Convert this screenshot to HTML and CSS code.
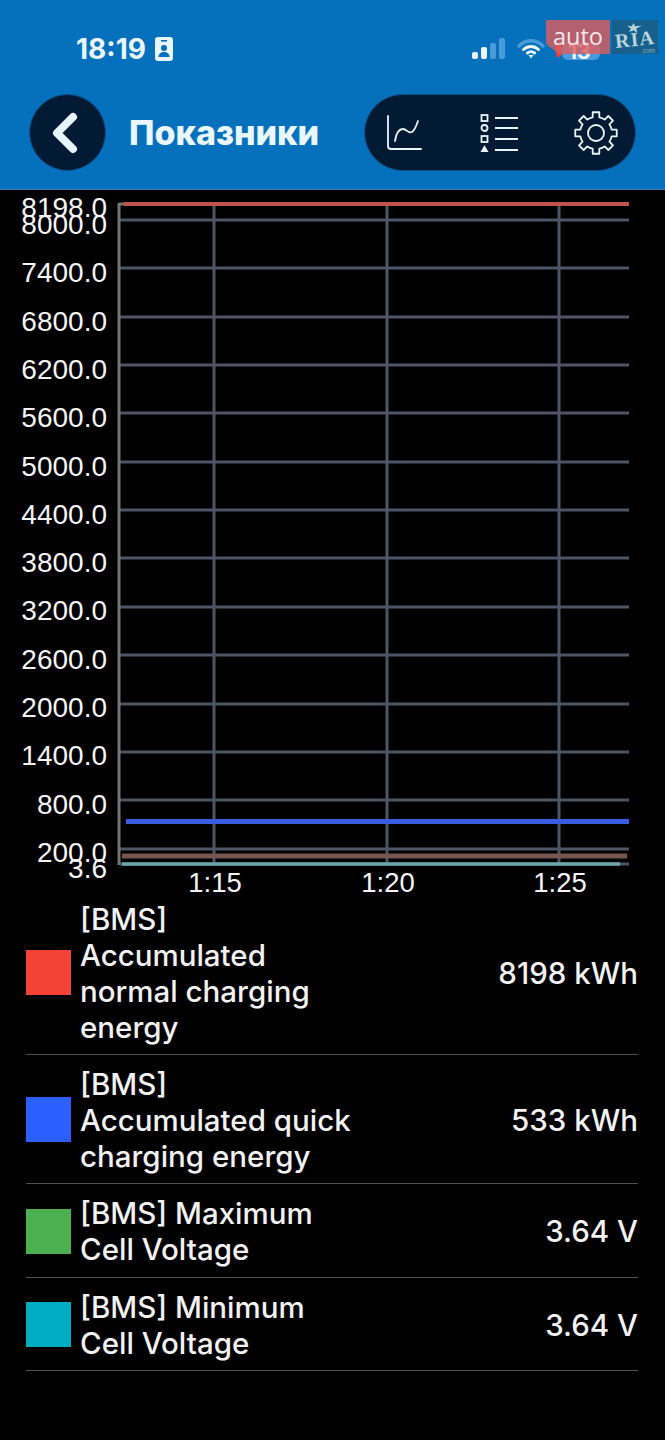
FILE: index.html
```html
<!DOCTYPE html>
<html lang="en">
<head>
    <meta charset="UTF-8">
    <meta name="viewport" content="width=device-width, initial-scale=1.0">
    <title>Показники</title>
    <link rel="stylesheet" href="styles.css">
</head>
<body>
    <header class="top-panel">
        <div class="status-bar">
            <div class="status-left">
                <span class="clock">18:19</span>
                <svg class="id-badge" width="18" height="24" viewBox="0 0 18 24">
                    <rect width="18" height="24" rx="3" fill="#eaf6fd"/>
                    <rect x="6" y="3" width="6" height="1.6" fill="#0571bc"/>
                    <circle cx="9" cy="11" r="3" fill="#0571bc"/>
                    <path d="M3.5 20c0-3.5 2.5-5 5.500-5s5.500 1.500 5.500 5z" fill="#0571bc"/>
                </svg>
            </div>
            <div class="status-right">
                <svg width="33" height="21" viewBox="0 0 33 21">
                    <rect x="0" y="14" width="6" height="7" rx="2" fill="#eaf6fd"/>
                    <rect x="9" y="9" width="6" height="12" rx="2" fill="#eaf6fd"/>
                    <rect x="18" y="5" width="6" height="16" rx="2" fill="#4a9bd8"/>
                    <rect x="27" y="0" width="6" height="21" rx="2" fill="#4a9bd8"/>
                </svg>
                <svg width="28" height="21" viewBox="0 0 28 21" fill="none" stroke-linecap="round">
                    <path d="M2 8c7-7 17-7 24 0" stroke="#4a9bd8" stroke-width="3.500"/>
                    <path d="M6.500 11.500c4.500-4 10.500-4 15 0" stroke="#eaf6fd" stroke-width="3"/>
                    <path d="M10.500 15c2-1.700 5-1.700 7 0" stroke="#eaf6fd" stroke-width="3"/>
                    <path d="M11.500 17l2.500 3.500 2.500-3.500z" fill="#eaf6fd"/>
                </svg>
                <div class="battery"><span class="battery-dot"></span><span class="battery-level">13</span></div>
            </div>
        </div>
        <nav class="nav-row">
            <button class="back-btn">
                <svg width="28" height="42" viewBox="0 0 28 42" fill="none">
                    <path d="M22 5L6 21l16 16" stroke="#e6f4fd" stroke-width="8" stroke-linecap="round" stroke-linejoin="round"/>
                </svg>
            </button>
            <h1 class="page-title">Показники</h1>
            <div class="tool-pill">
                <svg width="36" height="36" viewBox="0 0 36 36" fill="none" stroke="#eaf6fd" stroke-width="1.800" stroke-linecap="round">
                    <path d="M2 1v30q0 3 3 3h30"/>
                    <path d="M9 26c1-7 4-12 8-12s5 5 9 3c3-2 5-8 6-11"/>
                </svg>
                <svg class="list-icon" width="38" height="38" viewBox="0 0 38 38" fill="none" stroke="#eaf6fd" stroke-width="1.800">
                    <rect x="1.500" y="1" width="6" height="6"/>
                    <circle cx="4.500" cy="14" r="3"/>
                    <rect x="1.500" y="22" width="6" height="6"/>
                    <path d="M4.500 33l3 5h-6z" fill="#eaf6fd"/>
                    <path d="M15 4h23M15 14h23M15 25h23M15 36h23" stroke-width="2"/>
                </svg>
                <svg width="44" height="44" viewBox="-22 -22 44 44" fill="none" stroke="#eaf6fd" stroke-width="1.800" stroke-linejoin="round">
                    <path d="M-3.330-15.650L-3.290-20.740L3.290-20.740L3.330-15.650A16 16 0 0 1 8.710-13.420L12.340-16.990L16.990-12.340L13.420-8.710A16 16 0 0 1 15.650-3.330L20.740-3.290L20.740 3.290L15.650 3.330A16 16 0 0 1 13.420 8.710L16.990 12.340L12.340 16.990L8.710 13.420A16 16 0 0 1 3.330 15.650L3.290 20.740L-3.290 20.740L-3.330 15.650A16 16 0 0 1-8.710 13.420L-12.340 16.990L-16.990 12.340L-13.420 8.710A16 16 0 0 1-15.650 3.330L-20.740 3.290L-20.740-3.290L-15.650-3.330A16 16 0 0 1-13.420-8.710L-16.990-12.340L-12.340-16.990L-8.710-13.420A16 16 0 0 1-3.330-15.650z"/>
                    <circle r="8"/>
                </svg>
            </div>
        </nav>
    </header>

    <!-- auto.ria stamp sits over the status bar -->
    <div class="stamp">
        <div class="stamp-auto">auto</div>
        <div class="stamp-ria">
            <svg class="stamp-star" width="17" height="10" viewBox="0 0 16 11"><path d="M7 0l1.500 3.500L16 3 10 6l1 5-4-3-5 2 2-4-4-3 5 .5z" fill="#b9d3dd"/></svg>
            <span class="stamp-name">RIA</span>
            <span class="stamp-com">.com</span>
        </div>
    </div>

    <section class="chart">
        <svg class="chart-svg" width="665" height="711" viewBox="0 190 665 711">
            <g class="grid">
                <path d="M120 220H629M120 268H629M120 317H629M120 365H629M120 413H629M120 462H629M120 510H629M120 558H629M120 607H629M120 655H629M120 704H629M120 752H629M120 800H629M120 849H629M120 864H629"/>
                <path d="M214 204V864M387 204V864M559 204V864"/>
            </g>
            <path class="axis" d="M119 203V865"/>
            <path class="axis" d="M119 204H124"/>
            <path class="line-normal" d="M124 204H629"/>
            <path class="line-quick" d="M126 821.500H629"/>
            <path class="line-max" d="M122 856H627"/>
            <path class="line-min" d="M122 864H620"/>
            <g class="y-labels">
                <text x="107" y="217">8198.0</text>
                <text x="107" y="234">8000.0</text>
                <text x="107" y="282">7400.0</text>
                <text x="107" y="331">6800.0</text>
                <text x="107" y="379">6200.0</text>
                <text x="107" y="427">5600.0</text>
                <text x="107" y="476">5000.0</text>
                <text x="107" y="524">4400.0</text>
                <text x="107" y="572">3800.0</text>
                <text x="107" y="620">3200.0</text>
                <text x="107" y="669">2600.0</text>
                <text x="107" y="717">2000.0</text>
                <text x="107" y="765">1400.0</text>
                <text x="107" y="814">800.0</text>
                <text x="107" y="862">200.0</text>
                <text x="107" y="878">3.6</text>
            </g>
            <g class="x-labels">
                <text x="215" y="892">1:15</text>
                <text x="388" y="892">1:20</text>
                <text x="560" y="892">1:25</text>
            </g>
        </svg>
    </section>

    <ul class="legend">
        <li class="legend-row">
            <span class="swatch swatch-red"></span>
            <span class="legend-name">[BMS]<br>Accumulated<br>normal charging<br>energy</span>
            <span class="legend-value">8198 kWh</span>
        </li>
        <li class="legend-row">
            <span class="swatch swatch-blue"></span>
            <span class="legend-name">[BMS]<br>Accumulated quick<br>charging energy</span>
            <span class="legend-value">533 kWh</span>
        </li>
        <li class="legend-row">
            <span class="swatch swatch-green"></span>
            <span class="legend-name">[BMS] Maximum<br>Cell Voltage</span>
            <span class="legend-value">3.64 V</span>
        </li>
        <li class="legend-row">
            <span class="swatch swatch-teal"></span>
            <span class="legend-name">[BMS] Minimum<br>Cell Voltage</span>
            <span class="legend-value">3.64 V</span>
        </li>
    </ul>
</body>
</html>
```
FILE: styles.css
```css
body {
    font-family: 'Inter', 'Liberation Sans', sans-serif;
    background-color: #000;
    color: #f2f2f2;
    margin: 0;
    position: relative;
}

.top-panel {
    background-color: #0571bc;
    height: 190px;
    box-sizing: border-box;
    border-bottom: 1px solid #3f7eb0;
}

.status-bar {
    height: 94px;
    box-sizing: border-box;
    padding: 37px 65px 0 76px;
    display: flex;
    justify-content: space-between;
    align-items: flex-start;
}

.status-left {
    display: flex;
    align-items: center;
    gap: 9px;
}

.clock {
    color: #eaf6fd;
    font-size: 28px;
    line-height: 24px;
    font-weight: 700;
}

.status-right {
    display: flex;
    gap: 12px;
    padding-top: 1px;
}

.battery {
    width: 38px;
    height: 18px;
    margin-left: 5px;
    margin-top: 4px;
    background-color: #4a9bd8;
    border-radius: 6px;
    position: relative;
}

.battery-level {
    position: absolute;
    left: 6px;
    top: -3px;
    color: #eaf6fd;
    font-size: 21px;
    font-weight: 700;
}

.battery-dot {
    position: absolute;
    left: -6px;
    top: 1px;
    width: 5px;
    height: 14px;
    background-color: #e8413a;
    border-radius: 3px;
}

.nav-row {
    display: flex;
    align-items: center;
    padding: 0 29px;
    height: 77px;
}

.back-btn {
    width: 77px;
    height: 77px;
    padding: 0 6px 0 0;
    background-color: #021a33;
    border: 1px solid #0b4f8a;
    border-radius: 50%;
    display: flex;
    justify-content: center;
    align-items: center;
}

.page-title {
    color: #eaf6fd;
    font-size: 34px;
    font-weight: 800;
    margin: 0 0 0 23px;
    flex: 1;
}

.tool-pill {
    width: 272px;
    height: 77px;
    box-sizing: border-box;
    padding: 0 17px 0 21px;
    background-color: #021a33;
    border: 1px solid #0b4f8a;
    border-radius: 39px;
    display: flex;
    justify-content: space-between;
    align-items: center;
}

.list-icon {
    margin-left: 2px;
}

/* watermark */
.stamp {
    position: absolute;
    left: 546px;
    top: 20px;
    display: flex;
    gap: 2px;
    height: 34px;
}

.stamp-auto {
    width: 64px;
    background-color: rgba(222, 92, 92, 0.8);
    color: #f7e6e6;
    font-family: 'Open Sans', sans-serif;
    font-size: 23.500px;
    line-height: 33px;
    text-align: center;
    clip-path: polygon(0 0, 100% 0, 100% 100%, 20% 100%, 0 70%);
}

.stamp-ria {
    width: 46px;
    background-color: #17608c;
    position: relative;
}

.stamp-star {
    position: absolute;
    left: 14px;
    top: 3px;
}

.stamp-name {
    position: absolute;
    left: 3px;
    top: 9px;
    color: #b9d3dd;
    font-family: 'Liberation Serif', serif;
    font-size: 20px;
    line-height: 20px;
    font-weight: 700;
    letter-spacing: 1px;
    transform: rotate(-6deg);
}

.stamp-com {
    position: absolute;
    right: 3px;
    bottom: 0;
    color: #8fb4c6;
    font-size: 6px;
}

/* chart */
.chart {
    height: 699.600px;
}

.chart-svg {
    display: block;
    overflow: visible;
}

.grid path {
    stroke: #4e5567;
    stroke-width: 3;
    fill: none;
}

.axis {
    stroke: #757575;
    stroke-width: 3;
    fill: none;
}

.line-normal {
    stroke: #c0534c;
    stroke-width: 4;
}

.line-quick {
    stroke: #3a5ce0;
    stroke-width: 5;
}

.line-max {
    stroke: #75574f;
    stroke-width: 5;
}

.line-min {
    stroke: #6aa6ab;
    stroke-width: 3.500;
}

.y-labels text,
.x-labels text {
    fill: #f5f5f5;
    font-family: 'Liberation Sans', sans-serif;
    font-size: 27.500px;
}

.y-labels text {
    font-size: 28px;
    text-anchor: end;
}

.x-labels text {
    text-anchor: middle;
}

/* legend */
.legend {
    list-style: none;
    margin: 0 27px 0 26px;
    padding: 0;
}

.legend-row {
    display: flex;
    align-items: center;
    padding: 11px 0 9.400px;
    border-bottom: 1px solid #4f4f55;
    font-size: 29.500px;
    font-weight: 500;
    line-height: 36px;
}

.swatch {
    width: 45px;
    height: 45px;
    flex-shrink: 0;
    margin-right: 9px;
}

.swatch-red {
    background-color: #f44336;
}

.swatch-blue {
    background-color: #2b5fff;
}

.swatch-green {
    background-color: #4caf50;
}

.swatch-teal {
    background-color: #00acc1;
}

.legend-name {
    flex: 1;
}

.legend-value {
    white-space: nowrap;
}
```
